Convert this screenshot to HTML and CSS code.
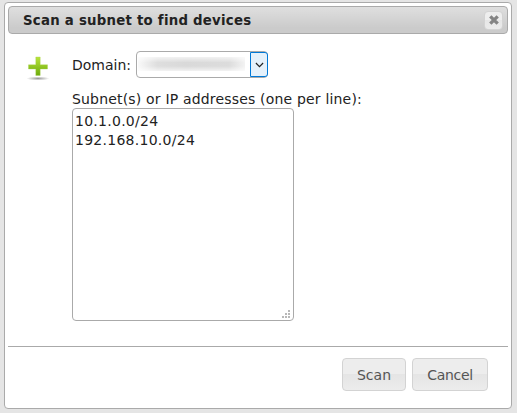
FILE: index.html
```html
<!DOCTYPE html>
<html lang="en">
<head>
<meta charset="utf-8">
<title>Scan a subnet to find devices</title>
<link rel="stylesheet" href="styles.css">
</head>
<body>
<section class="dialog" role="dialog" aria-labelledby="dialog-title">
  <header class="titlebar">
    <h1 class="title" id="dialog-title">Scan a subnet to find devices</h1>
    <button class="close" aria-label="Close">
      <svg width="10" height="10" viewBox="0 0 10 10"><path d="M1.300 1.300l7.400 7.400M8.700 1.300l-7.400 7.400" stroke="#848484" stroke-width="3.300"/></svg>
    </button>
  </header>
  <div class="content">
    <svg class="add-icon" width="24" height="26" viewBox="0 0 24 26">
      <defs>
        <linearGradient id="green" x1="0" y1="0" x2="0" y2="1"><stop offset="0" stop-color="#b9e43b"/><stop offset="1" stop-color="#6caa0c"/></linearGradient>
        <radialGradient id="shade"><stop offset="0" stop-color="#999"/><stop offset="1" stop-color="#999" stop-opacity="0"/></radialGradient>
      </defs>
      <ellipse cx="12" cy="23.5" rx="11.500" ry="2" fill="url(#shade)"/>
      <path d="M9.800 2h4.400v7.800h7.300v4.200H14.200v6.500H9.800V14H2.500V9.800h7.300z" fill="url(#green)" stroke="#a5d24a" stroke-opacity=".5" stroke-width=".7"/>
    </svg>
    <div class="form">
      <div class="domain-row">
        <span class="domain-label">Domain:</span>
        <div class="select">
          <span class="select-value"></span>
          <span class="select-arrow"><svg width="10" height="6" viewBox="0 0 10 6"><path d="M1 .8l4 4 4-4" fill="none" stroke="#222" stroke-width="1.3"/></svg></span>
        </div>
      </div>
      <label class="subnet-label" for="subnets">Subnet(s) or IP addresses (one per line):</label>
      <div class="field">
        <textarea class="subnets" id="subnets" spellcheck="false">10.1.0.0/24
192.168.10.0/24</textarea>
        <svg class="grip" width="8" height="8" viewBox="0 0 8 8"><path d="M6 0h2v2H6zM3 3h2v2H3zM6 3h2v2H6zM0 6h2v2H0zM3 6h2v2H3zM6 6h2v2H6z" fill="#b8b8b8"/></svg>
      </div>
    </div>
  </div>
  <footer class="buttons">
    <button class="button scan">Scan</button>
    <button class="button cancel">Cancel</button>
  </footer>
</section>
</body>
</html>
```
FILE: styles.css
```css
* { box-sizing: border-box; }
body {
  margin: 0;
  padding: 2px 5px 4px 4px;
  height: 413px;
  overflow: hidden;
  background: #e5e5e5;
  color: #222;
  font: 14px/18px Verdana, "DejaVu Sans", sans-serif;
}
.dialog {
  display: flex;
  flex-direction: column;
  height: 407px;
  padding: 3px;
  border: 1px solid #aaa;
  border-radius: 4px;
  background: #fff;
}
.titlebar {
  display: flex;
  align-items: center;
  justify-content: space-between;
  height: 28px;
  padding: 0 4px 0 14px;
  border: 1px solid #aaa;
  border-radius: 4px;
  background: linear-gradient(#dfdfdf, #cbcbcb 80%);
}
.title { margin: 0; padding-top: 1px; font-size: 13.3px; line-height: 18px; letter-spacing: .25px; white-space: nowrap; }
.close {
  display: flex;
  align-items: center;
  justify-content: center;
  width: 19px;
  height: 19px;
  padding: 0;
  border: 1px solid #d3d3d3;
  border-radius: 4px;
  background: linear-gradient(#eee 50%, #e6e6e6 50%, #ebebeb);
}
.content { display: flex; height: 312px; padding: 17px 0 0 18px; }
.add-icon { flex: none; margin-top: 4px; }
.form { margin-left: 22px; }
.domain-row { display: flex; align-items: center; height: 27px; }
.domain-label { width: 64px; white-space: nowrap; }
.select {
  display: flex;
  align-items: stretch;
  justify-content: space-between;
  width: 132px;
  height: 27px;
  border: 1px solid #aaa;
  border-radius: 4px;
  background: #fff;
}
.select-value {
  width: 107px;
  height: 14px;
  margin: 5px 0 0 1px;
  background: linear-gradient(90deg, #f9f9f9, #dedede 18%, #d9d9d9 45%, #dcdcdc 85%, #f3f3f3);
  -webkit-mask-image: linear-gradient(rgba(0,0,0,.35), #000 40%, #000 65%, rgba(0,0,0,.35));
  mask-image: linear-gradient(rgba(0,0,0,.35), #000 40%, #000 65%, rgba(0,0,0,.35));
}
.select-arrow {
  display: flex;
  align-items: center;
  justify-content: center;
  width: 18px;
  margin-right: -1px;
  border: 1px solid #0078d7;
  border-radius: 0 3px 3px 0;
  background: #e5f1fb;
}
.select-arrow svg { width: 9px; }
.subnet-label { display: block; margin-top: 12px; letter-spacing: .18px; white-space: nowrap; }
.field { position: relative; width: 222px; height: 213px; }
.subnets {
  display: block;
  width: 222px;
  height: 213px;
  margin: 0;
  padding: 3px 2px;
  border: 1px solid #aaa;
  border-radius: 4px;
  outline: 0;
  resize: none;
  overflow: hidden;
  background: #fff;
  color: #222;
  font: inherit;
  line-height: 19px;
  letter-spacing: .27px;
}
.grip { position: absolute; right: 4px; bottom: 3px; }
.buttons {
  display: flex;
  justify-content: flex-end;
  gap: 6px;
  height: 59px;
  padding: 11px 20px 0 0;
  border-top: 1px solid #aaa;
}
.button {
  height: 33px;
  padding: 0;
  border: 1px solid #d3d3d3;
  border-radius: 4px;
  background: linear-gradient(#ededed 50%, #e5e5e5 50%, #ececec);
  color: #555;
  font: inherit;
}
.scan { width: 64px; }
.cancel { width: 76px; letter-spacing: -.3px; }
```
